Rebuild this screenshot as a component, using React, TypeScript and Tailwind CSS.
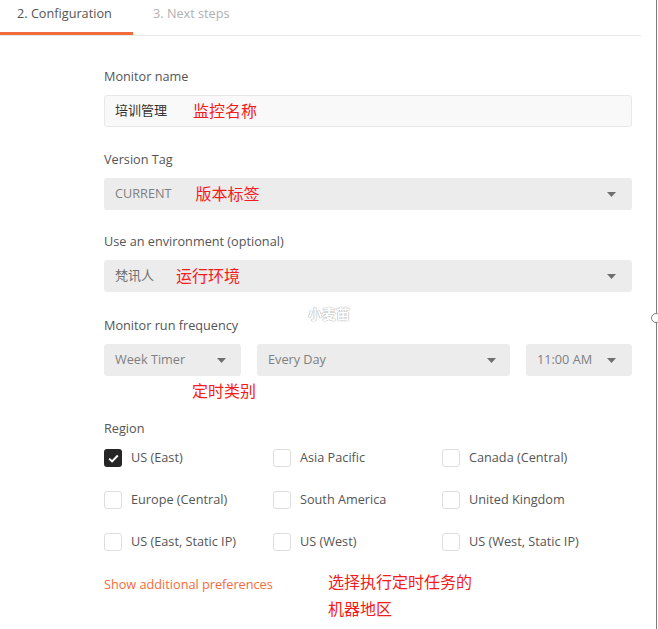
const Caret = () => (
  <svg width="9" height="5" viewBox="0 0 9 5" className="shrink-0">
    <path d="M0 0h9L4.5 5z" fill="#6f6f6f" />
  </svg>
);

const Note = ({ children, className = "" }: { children: React.ReactNode; className?: string }) => (
  <span className={`text-[16px] leading-[22px] text-[#f51b1b] ${className}`}>{children}</span>
);

const Check = ({ label, checked = false }: { label: string; checked?: boolean }) => (
  <div className="flex items-center h-[26px]">
    {checked ? (
      <div className="w-[18px] h-[18px] rounded-[3px] bg-[#262626] flex items-center justify-center">
        <svg width="11" height="9" viewBox="0 0 11 9">
          <path d="M1.2 4.6l2.9 2.8L9.8 1.5" stroke="#fff" strokeWidth="2" fill="none" />
        </svg>
      </div>
    ) : (
      <div className="w-[18px] h-[18px] rounded-[3px] border border-[#dedede] bg-white" />
    )}
    <span className="ml-[9px] text-[12.7px] text-[#555]">{label}</span>
  </div>
);

const Label = ({ children }: { children: React.ReactNode }) => (
  <p className="text-[12.7px] leading-[18px] text-[#555] mb-[10px]">{children}</p>
);

export default function App() {
  return (
    <div className="relative w-[658px] h-[629px] bg-white overflow-hidden font-['Open_Sans','Noto_Sans_CJK_SC',sans-serif]">
      <div className="w-[657px] h-full border-r border-[#7d7d7d]">
        {/* tabs */}
        <div className="flex w-[641px] border-b border-[#e8e8e8]">
          <div className="w-[133px] h-[35px] pt-[4px] pl-[17px] border-b-[3px] border-[#f26b3a] text-[12.7px] leading-[18px] text-[#555]">
            2. Configuration
          </div>
          <div className="pt-[4px] pl-[20px] text-[12.7px] leading-[18px] text-[#b0b0b0]">3. Next steps</div>
        </div>

        <div className="pl-[104px] w-[632px] mt-[31px]">
          <Label>Monitor name</Label>
          <div className="h-[32px] rounded-[3px] bg-[#f9f9f9] border border-[#e8e8e8] pl-[10px] flex items-center">
            <span className="text-[13px] text-[#333]">培训管理</span>
            <Note className="ml-[26px]">监控名称</Note>
          </div>

          <div className="mt-[23px]">
            <Label>Version Tag</Label>
            <div className="h-[32px] rounded-[3px] bg-[#ececec] pl-[11px] pr-[16px] flex items-center">
              <span className="text-[12.7px] text-[#808080]">CURRENT</span>
              <Note className="ml-[24px]">版本标签</Note>
              <span className="ml-auto"><Caret /></span>
            </div>
          </div>

          <div className="mt-[22px]">
            <Label>Use an environment (optional)</Label>
            <div className="h-[32px] rounded-[3px] bg-[#ececec] pl-[11px] pr-[16px] flex items-center">
              <span className="text-[13px] text-[#707070]">梵讯人</span>
              <Note className="ml-[22px]">运行环境</Note>
              <span className="ml-auto"><Caret /></span>
            </div>
          </div>

          <div className="mt-[24px]">
            <Label>Monitor run frequency</Label>
            <div className="flex gap-[16px]">
              <div className="w-[137px] h-[32px] rounded-[3px] bg-[#ececec] pl-[11px] pr-[15px] flex items-center justify-between">
                <span className="text-[12.7px] text-[#808080]">Week Timer</span>
                <Caret />
              </div>
              <div className="w-[253px] h-[32px] rounded-[3px] bg-[#ececec] pl-[11px] pr-[14px] flex items-center justify-between">
                <span className="text-[12.7px] text-[#808080]">Every Day</span>
                <Caret />
              </div>
              <div className="w-[106px] h-[32px] rounded-[3px] bg-[#ececec] pl-[11px] pr-[16px] flex items-center justify-between">
                <span className="text-[12.7px] text-[#808080]">11:00 AM</span>
                <Caret />
              </div>
            </div>
            <div className="pl-[88px] mt-[3px]">
              <Note>定时类别</Note>
            </div>
          </div>

          <div className="mt-[16px]">
            <p className="text-[12.7px] leading-[18px] text-[#555]">Region</p>
            <div className="grid grid-cols-[169px_169px_190px] gap-y-[16px] mt-[8px]">
              <Check label="US (East)" checked />
              <Check label="Asia Pacific" />
              <Check label="Canada (Central)" />
              <Check label="Europe (Central)" />
              <Check label="South America" />
              <Check label="United Kingdom" />
              <Check label="US (East, Static IP)" />
              <Check label="US (West)" />
              <Check label="US (West, Static IP)" />
            </div>
          </div>

          <div className="flex mt-[14px]">
            <span className="w-[224px] pt-[6px] text-[12.7px] leading-[18px] text-[#f26b3a]">Show additional preferences</span>
            <div className="flex flex-col text-[16px] leading-[27px] text-[#f51b1b]">
              <span>选择执行定时任务的</span>
              <span>机器地区</span>
            </div>
          </div>
        </div>
      </div>

      {/* watermark */}
      <span className="absolute left-[308px] top-[303px] text-[14px] font-bold text-white [text-shadow:0_0_1px_#9a9a9a,0_0_1px_#9a9a9a]">
        小麦苗
      </span>
      {/* resize handle on the panel edge */}
      <div className="absolute left-[651px] top-[313px] w-[10px] h-[10px] rounded-full border border-[#7d7d7d] bg-white" />
    </div>
  );
}
